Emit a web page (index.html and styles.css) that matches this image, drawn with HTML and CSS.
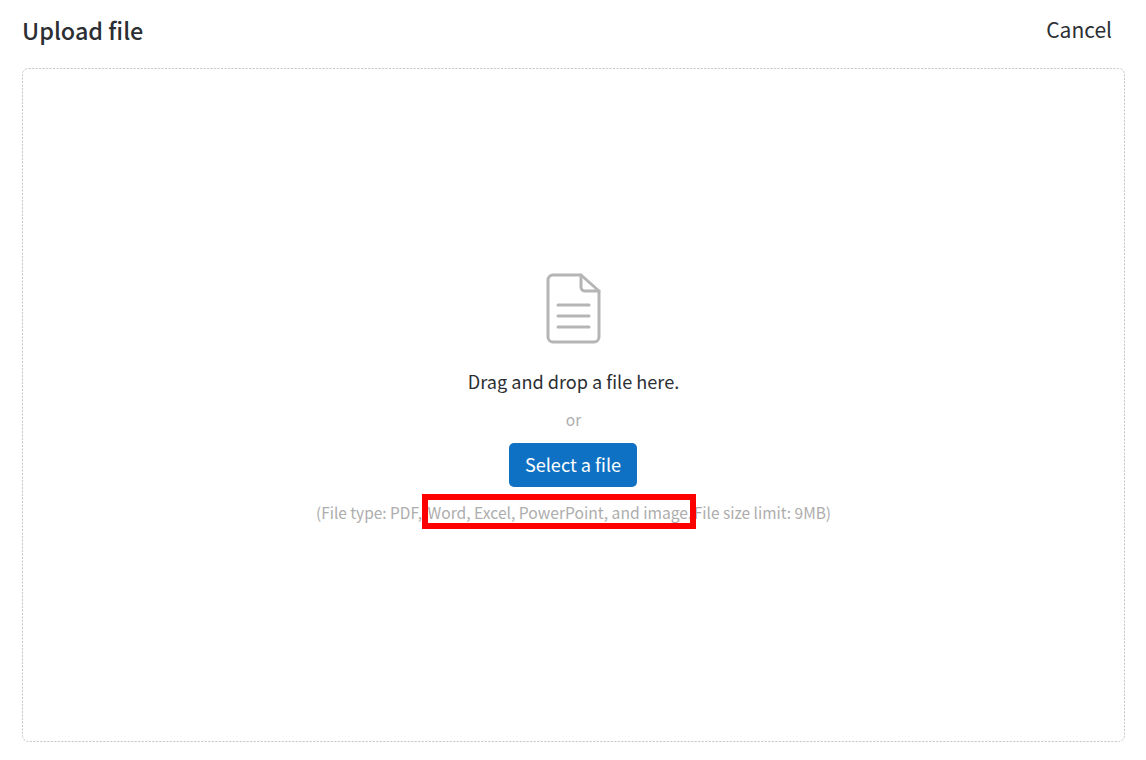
FILE: index.html
```html
<!DOCTYPE html>
<html lang="en">
<head>
<meta charset="utf-8">
<title>Upload file</title>
<link rel="stylesheet" href="styles.css">
</head>
<body>
<div class="page">
  <header class="header">
    <h1 class="title">Upload file</h1>
    <a class="cancel">Cancel</a>
  </header>
  <section class="dropzone">
    <svg class="outline" width="1103" height="674" fill="none" stroke="#c8c8c8" stroke-width="1" stroke-dasharray="2.2 1.3">
      <rect x="0.5" y="0.5" width="1102" height="673" rx="6"/>
    </svg>
    <svg class="file-icon" width="56" height="72" viewBox="0 0 56 72" fill="none" stroke="#b5b5b5" stroke-width="3" stroke-linejoin="round" stroke-linecap="round">
      <path d="M35 2H7a5 5 0 0 0-5 5v57a5 5 0 0 0 5 5h41a5 5 0 0 0 5-5V18L35 2Z"/>
      <path d="M35 2v12a4 4 0 0 0 4 4h14"/>
      <path d="M12 32h31M12 43h31M12 54h31"/>
    </svg>
    <p class="drag">Drag and drop a file here.</p>
    <p class="or">or</p>
    <button class="select" type="button">Select a file</button>
    <p class="note">(File type: PDF, <span class="types">Word, Excel, PowerPoint, and image.</span> File size limit: 9MB)<span class="highlight"></span></p>
  </section>
</div>
</body>
</html>
```
FILE: styles.css
```css
* { box-sizing: border-box; }
html, body { margin: 0; padding: 0; background: #fff; }
body { font-family: "Noto Sans CJK JP", "Noto Sans", sans-serif; color: #2b2f33; }
.page { width: 1146px; height: 760px; padding: 0 21px 18px 22px; display: flex; flex-direction: column; }
.header { height: 68px; display: flex; justify-content: space-between; align-items: flex-start; flex: none; }
.title { margin: 12px 0 0; font-size: 23.4px; line-height: 36px; font-weight: 500; }
.cancel { margin: 11px 13px 0 0; font-size: 21px; line-height: 36px; font-weight: 400; }
.dropzone { position: relative; flex: 1; border-radius: 6px; display: flex; flex-direction: column; align-items: center; padding-top: 205px; }
.outline { position: absolute; left: 0; top: 0; }
.file-icon { display: block; }
.drag { margin: 22px 0 0; font-size: 18.1px; line-height: 28px; }
.or { margin: 12px 0 0; font-size: 15.5px; line-height: 24px; color: #adadad; }
.select { margin: 12px 1px 0 0; width: 128px; height: 44px; border: 0; border-radius: 5px; background: #0e71c4; color: #fff; font: 400 18.1px/42px "Noto Sans CJK JP", "Noto Sans", sans-serif; padding: 0 0 2px; }
.note { position: relative; margin: 13px 0 0; font-size: 15.45px; line-height: 25px; color: #adadad; white-space: nowrap; }
.types { position: relative; left: 2px; font-size: 15.65px; }
.highlight { position: absolute; left: 106px; top: -6px; width: 274px; height: 35px; border: 6px solid #fe0000; }
```
